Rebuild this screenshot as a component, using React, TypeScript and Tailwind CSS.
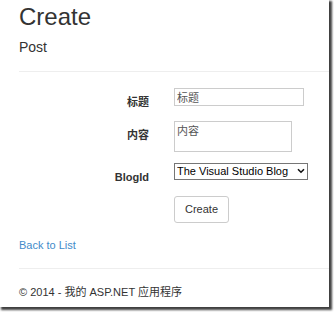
import React from "react";

const FONT = "font-['Liberation_Sans','Noto_Sans_CJK_SC',Arial,sans-serif]";

type RowProps = {
  label: string;
  children: React.ReactNode;
};

const FormRow = ({ label, children }: RowProps) => (
  <div className="mb-[11px] flex items-start">
    <label className="w-[131px] shrink-0 pr-px pt-[7px] text-right text-[11px] font-bold leading-[15px] text-[#333]">
      {label}
    </label>
    <div className="ml-[24px] flex">{children}</div>
  </div>
);

export default function App() {
  return (
    <div className={`h-[312px] w-[334px] overflow-hidden bg-white ${FONT}`}>
      <div className="h-[307px] w-[329px] overflow-hidden bg-white shadow-[2px_2px_2px_1px_rgba(0,0,0,0.75)]">
        <h2 className="ml-[19px] mt-[4px] text-[24px] font-normal leading-[26px] text-[#333]">Create</h2>
        <h4 className="ml-[19px] mt-[9px] text-[14px] font-normal leading-[16px] text-[#333]">Post</h4>
        <hr className="ml-[19px] mt-[16px] border-t border-[#eee]" />

        <div className="mt-[16px] pl-[19px]">
          <FormRow label="标题">
            <input
              defaultValue="标题"
              className="block h-[18px] w-[130px] border border-[#ccc] px-[2px] text-[11px] leading-[14px] text-[#555] outline-none"
            />
          </FormRow>
          <FormRow label="内容">
            <textarea
              defaultValue="内容"
              className="block h-[31px] w-[118px] resize-none border border-[#ccc] px-[2px] pt-[2px] text-[11px] leading-[14px] text-[#555] outline-none"
            />
          </FormRow>
          <FormRow label="BlogId">
            <div className="relative flex">
              <select
                defaultValue="1"
                className="block h-[17px] w-[134px] appearance-none rounded-none border border-[#767676] bg-white pl-[2px] pr-[12px] text-[11px] leading-[15px] text-black outline-none"
              >
                <option value="1">The Visual Studio Blog</option>
              </select>
              <svg
                className="pointer-events-none absolute right-[3px] top-[5px]"
                width="8"
                height="6"
                viewBox="0 0 8 6"
              >
                <path d="M1 1.2 L4 4.2 L7 1.2" fill="none" stroke="#111" strokeWidth="1.6" />
              </svg>
            </div>
          </FormRow>

          <div className="ml-[155px] mt-[1px] flex">
            <button className="block h-[27px] w-[55px] rounded-[3px] border border-[#ccc] bg-white text-[11px] text-[#333]">
              Create
            </button>
          </div>
        </div>

        <div className="ml-[19px] mt-[15px] flex">
          <a href="#" className="block text-[11px] leading-[15px] text-[#428bca]">
            Back to List
          </a>
        </div>

        <hr className="ml-[19px] mt-[15px] border-t border-[#eee]" />
        <footer className="ml-[19px] mt-[16px] text-[11px] leading-[15px] text-[#333]">
          © 2014 - 我的 ASP.NET 应用程序
        </footer>
      </div>
    </div>
  );
}
